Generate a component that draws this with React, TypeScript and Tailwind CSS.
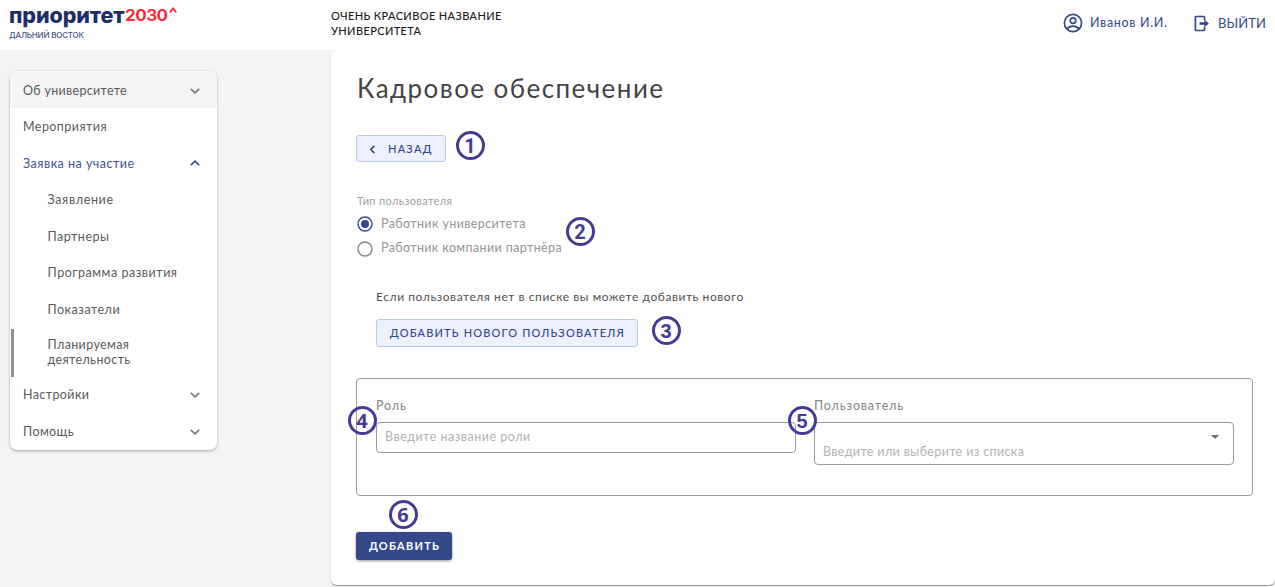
import type { ReactNode } from "react";

function Chevron({ up = false, className = "" }: { up?: boolean; className?: string }) {
  return (
    <svg viewBox="0 0 10 6" className={`h-[6px] w-[10px] ${className}`} fill="none" stroke="currentColor" strokeWidth="1.6">
      <path d={up ? "M0.8 5.2 5 1.2 9.2 5.2" : "M0.8 0.8 5 4.8 9.2 0.8"} />
    </svg>
  );
}

function MenuItem({ label, tracking, open, active }: { label: string; tracking: string; open?: boolean; active?: boolean }) {
  return (
    <div className={`flex h-[36.5px] items-center justify-between pt-[2px] pr-[17px] pl-[13.5px] ${active ? "text-[#3f539b]" : ""}`}>
      <span className={tracking}>{label}</span>
      {open !== undefined && <Chevron up={open} className={active ? "text-[#34488a]" : "mt-[1px] text-[#777]"} />}
    </div>
  );
}

function SubItem({ label, tracking }: { label: string; tracking: string }) {
  return (
    <div className="flex h-[36.5px] items-center pt-[2px] pl-[38px]">
      <span className={tracking}>{label}</span>
    </div>
  );
}

function Marker({ children, className }: { children: ReactNode; className: string }) {
  return (
    <div className={`absolute flex size-[29px] items-center justify-center rounded-full border-3 border-[#453a94] text-[20px] leading-none font-bold text-[#453a94] ${className}`}>
      {children}
    </div>
  );
}

function Radio({ label, tracking, checked }: { label: string; tracking: string; checked?: boolean }) {
  return (
    <div className="flex h-[24.5px] items-center gap-[8px] text-[12.5px] text-[#959595]">
      <svg viewBox="0 0 16 16" className={`size-[16px] ${checked ? "text-[#34488a]" : "text-[#858585]"}`}>
        <circle cx="8" cy="8" r="7" fill="none" stroke="currentColor" strokeWidth="1.4" />
        {checked && <circle cx="8" cy="8" r="4" fill="currentColor" />}
      </svg>
      <span className={tracking}>{label}</span>
    </div>
  );
}

export default function App() {
  return (
    <div className="flex h-[587px] w-[1275px] flex-col overflow-hidden bg-[#f2f3f5] font-['Lato',sans-serif] whitespace-nowrap">
      <header className="flex h-[50px] shrink-0 bg-white">
        <div className="w-[331px] pl-[9px] font-['Inter',sans-serif]">
          <div className="mt-[2px] flex h-[26px] items-center text-[21.5px] leading-[26px] font-extrabold text-[#1f2d66]">
            <span className="w-[116px] tracking-[-0.1px]">приоритет</span>
            <span className="w-[44px] origin-left scale-x-110 pt-[2px] text-[15.5px] font-bold tracking-[-0.5px] text-[#fa2c3c]">2030</span>
            <svg viewBox="0 0 8 6" className="mb-[10px] h-[6px] w-[8px]" fill="none" stroke="#fa2c3c" strokeWidth="1.8">
              <path d="M0.8 5.4 4 1.4 7.2 5.4" />
            </svg>
          </div>
          <div className="mt-[2px] text-[8px] leading-[11px] font-medium tracking-[-0.2px] text-[#4a5588]">ДАЛЬНИЙ ВОСТОК</div>
        </div>
        <div className="w-[732px] pt-[8px] text-[11px] leading-[15px] font-medium tracking-[0.38px] text-[#1c1c1c]">
          ОЧЕНЬ КРАСИВОЕ НАЗВАНИЕ
          <br />
          УНИВЕРСИТЕТА
        </div>
        <div className="flex h-[46px] items-center text-[#34488a]">
          <svg viewBox="0 0 20 20" className="mr-[7px] size-[20px]" fill="none" stroke="currentColor" strokeWidth="1.7">
            <circle cx="10" cy="10" r="8.6" />
            <circle cx="10" cy="7.6" r="2.8" />
            <path d="M4 16.1C5.4 14.2 7.5 13.2 10 13.2s4.600 1 6 2.900" />
          </svg>
          <span className="w-[104px] text-[12.5px] tracking-[0.65px]">Иванов И.И.</span>
          <svg viewBox="0 0 16 18" className="mt-[2px] mr-[8px] h-[18px] w-[16px]" fill="none" stroke="currentColor" strokeWidth="1.7">
            <path d="M10.500 5V2.300Q10.500 1.500 9.700 1.500H2.200Q1.400 1.500 1.400 2.300V14.700Q1.400 15.500 2.200 15.500H9.700Q10.500 15.500 10.500 14.700V12" />
            <path d="M5.500 8.500H11" strokeWidth="2.600" />
            <path d="M10.300 4.600 14.800 8.500 10.300 12.400Z" fill="currentColor" stroke="none" />
          </svg>
          <span className="pt-[2px] text-[13px] tracking-[0.1px]">ВЫЙТИ</span>
        </div>
      </header>

      <div className="flex h-[537px]">
        <aside className="w-[331px] pt-[21px] pl-[9.500px]">
          <nav className="h-[379px] w-[207px] overflow-hidden rounded-[7px] bg-white text-[12.5px] leading-[15px] text-[#5a5a5a] shadow-[0_1px_3px_rgba(0,0,0,0.3)]">
            <div className="bg-[#f5f5f5]">
              <MenuItem label="Об университете" tracking="tracking-[0.31px]" open={false} />
            </div>
            <MenuItem label="Мероприятия" tracking="tracking-[0.44px]" />
            <MenuItem label="Заявка на участие" tracking="tracking-[0.49px]" open active />
            <SubItem label="Заявление" tracking="tracking-[0.64px]" />
            <SubItem label="Партнеры" tracking="tracking-[0.5px]" />
            <SubItem label="Программа развития" tracking="tracking-[0.53px]" />
            <SubItem label="Показатели" tracking="tracking-[0.5px]" />
            <div className="mt-[2px] mb-[-1px] ml-px flex h-[48px] items-center border-l-[3px] border-[#8f8f8f] pb-[2px] pl-[34px] tracking-[0.37px]">
              <span>
                Планируемая
                <br />
                деятельность
              </span>
            </div>
            <MenuItem label="Настройки" tracking="tracking-[0.4px]" open={false} />
            <MenuItem label="Помощь" tracking="tracking-[0.4px]" open={false} />
          </nav>
        </aside>

        <main className="relative h-[535px] w-[944px] rounded-[6px] rounded-tr-none bg-white pl-[25px] shadow-[0_1px_1px_rgba(0,0,0,0.4)]">
          <h1 className="h-[56px] pt-[21px] pl-[1px] text-[26px] leading-[34px] tracking-[1.45px] text-[#444]">Кадровое обеспечение</h1>
          <button className="mt-[29px] flex h-[27px] w-[90px] items-center gap-[12px] rounded-[3px] border border-[#bcc7ea] bg-[#edf1fe] pt-[2px] pl-[12px] text-[11px] font-medium tracking-[1.24px] text-[#34488a]">
            <svg viewBox="0 0 7 10" className="h-[9px] w-[7px]" fill="none" stroke="currentColor" strokeWidth="1.8">
              <path d="M5.600 1 1.600 5 5.600 9" />
            </svg>
            НАЗАД
          </button>
          <div className="mt-[32px] pl-px text-[11px] leading-[14px] tracking-[0.36px] text-[#a0a0a0]">Тип пользователя</div>
          <div className="mt-[4px] ml-[1px] h-[49px]">
            <Radio label="Работник университета" tracking="tracking-[0.39px]" checked />
            <Radio label="Работник компании партнёра" tracking="tracking-[0.38px]" />
          </div>
          <div className="pl-[20px]">
            <p className="mt-[28px] text-[12px] leading-[16px] tracking-[0.58px] text-[#505050]">Если пользователя нет в списке вы можете добавить нового</p>
            <button className="mt-[14px] flex h-[28px] w-[262px] items-center rounded-[3px] border border-[#bcc7ea] bg-[#edf1fe] pl-[13px] text-[11px] font-medium tracking-[1.17px] text-[#34488a]">
              ДОБАВИТЬ НОВОГО ПОЛЬЗОВАТЕЛЯ
            </button>
          </div>
          <section className="mt-[31px] flex h-[118px] w-[897px] gap-[18px] rounded-[4px] border border-[#9c9c9c] pt-[19px] pl-[19px] text-[12.5px] font-medium text-[#8c8c8c]">
            <div className="w-[420px]">
              <div className="leading-[16px] tracking-[0.8px]">Роль</div>
              <div className="mt-[8px] flex h-[31px] items-center rounded-[4px] border border-[#9c9c9c] pl-[8px] text-[12.5px] font-normal tracking-[0.5px] text-[#b3b3b3]">
                Введите название роли
              </div>
            </div>
            <div className="w-[420px]">
              <div className="leading-[16px] tracking-[0.8px]">Пользователь</div>
              <div className="mt-[8px] flex h-[43px] justify-between rounded-[4px] border border-[#9c9c9c] pr-[14px] pl-[8px] text-[12.5px] font-normal tracking-[0.36px] text-[#b3b3b3]">
                <span className="self-end pb-[2px]">Введите или выберите из списка</span>
                <svg viewBox="0 0 8 4" className="mt-[12px] h-[4px] w-[8px]">
                  <path d="M0 0H8L4 4Z" fill="#707070" />
                </svg>
              </div>
            </div>
          </section>
          <button className="mt-[36px] flex h-[28px] w-[96px] items-center justify-center rounded-[3px] bg-[#34488a] pl-px text-[11px] font-bold tracking-[1.27px] text-white shadow-[0_1px_3px_rgba(0,0,0,0.4)]">
            ДОБАВИТЬ
          </button>

          <Marker className="top-[81px] left-[124.500px] font-['Roboto',sans-serif]">1</Marker>
          <Marker className="top-[167px] left-[234.500px] font-['Roboto',sans-serif]">2</Marker>
          <Marker className="top-[266px] left-[320.500px] font-['Liberation_Sans',sans-serif]">3</Marker>
          <Marker className="top-[356px] left-[16.500px] font-['Open_Sans',sans-serif]">4</Marker>
          <Marker className="top-[356px] left-[456.500px] font-['Liberation_Sans',sans-serif]">5</Marker>
          <Marker className="top-[450px] left-[57.500px] font-['Open_Sans',sans-serif]">6</Marker>
        </main>
      </div>
    </div>
  );
}
